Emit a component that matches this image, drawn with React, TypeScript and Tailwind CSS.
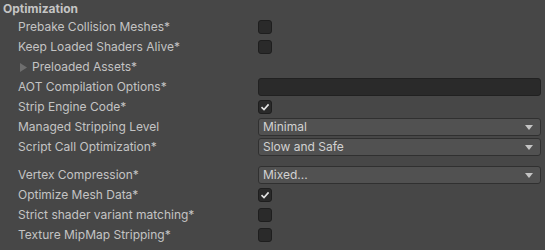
import React from "react";

type Row =
  | { kind: "check"; label: string; checked?: boolean }
  | { kind: "foldout"; label: string }
  | { kind: "text"; label: string }
  | { kind: "select"; label: string; value: string }
  | { kind: "spacer" };

const rows: Row[] = [
  { kind: "check", label: "Prebake Collision Meshes*" },
  { kind: "check", label: "Keep Loaded Shaders Alive*" },
  { kind: "foldout", label: "Preloaded Assets*" },
  { kind: "text", label: "AOT Compilation Options*" },
  { kind: "check", label: "Strip Engine Code*", checked: true },
  { kind: "select", label: "Managed Stripping Level", value: "Minimal" },
  { kind: "select", label: "Script Call Optimization*", value: "Slow and Safe" },
  { kind: "spacer" },
  { kind: "select", label: "Vertex Compression*", value: "Mixed..." },
  { kind: "check", label: "Optimize Mesh Data*", checked: true },
  { kind: "check", label: "Strict shader variant matching*" },
  { kind: "check", label: "Texture MipMap Stripping*" },
];

const Checkbox = ({ checked }: { checked?: boolean }) => (
  <div className="w-[14px] h-[14px] rounded-[3px] bg-[#2a2a2a] border border-[#1e1e1e] flex items-center justify-center">
    {checked && (
      <svg width="10" height="10" viewBox="0 0 10 10">
        <path d="M1.5 5.2 L4 7.6 L8.6 2.4" fill="none" stroke="#e4e4e4" strokeWidth="1.6" />
      </svg>
    )}
  </div>
);

const Select = ({ value }: { value: string }) => (
  <div className="w-[283px] h-[18px] rounded-[3px] bg-[#515151] border border-[#303030] flex items-center justify-between pl-[4px] pr-[7px] text-[#d2d2d2]">
    <span>{value}</span>
    <svg width="8" height="5" viewBox="0 0 8 5">
      <path d="M0 0 H8 L4 5 Z" fill="#c4c4c4" />
    </svg>
  </div>
);

export default function App() {
  return (
    <div
      className="w-[545px] h-[250px] bg-[#474747] text-[#c4c4c4] text-[12px] overflow-hidden"
      style={{ fontFamily: "Inter, 'Noto Sans', sans-serif" }}
    >
      <div className="h-[17px] pl-[3px] flex items-center font-bold">Optimization</div>
      {rows.map((row, i) => {
        if (row.kind === "spacer") return <div key={i} className="h-[8px]" />;
        return (
          <div key={i} className="h-5 flex items-center">
            <div className="w-[258px] pl-[18px] flex items-center">
              {row.kind === "foldout" ? (
                <>
                  <svg width="7" height="9" viewBox="0 0 7 9" className="ml-[2px] mr-[5px]">
                    <path d="M0 0 L7 4.5 L0 9 Z" fill="#6e6e6e" />
                  </svg>
                  <span>{row.label}</span>
                </>
              ) : (
                <span>{row.label}</span>
              )}
            </div>
            {row.kind === "check" && <Checkbox checked={row.checked} />}
            {row.kind === "text" && (
              <div className="w-[283px] h-[18px] rounded-[3px] bg-[#2a2a2a] border border-[#212121]" />
            )}
            {row.kind === "select" && <Select value={row.value} />}
          </div>
        );
      })}
    </div>
  );
}
